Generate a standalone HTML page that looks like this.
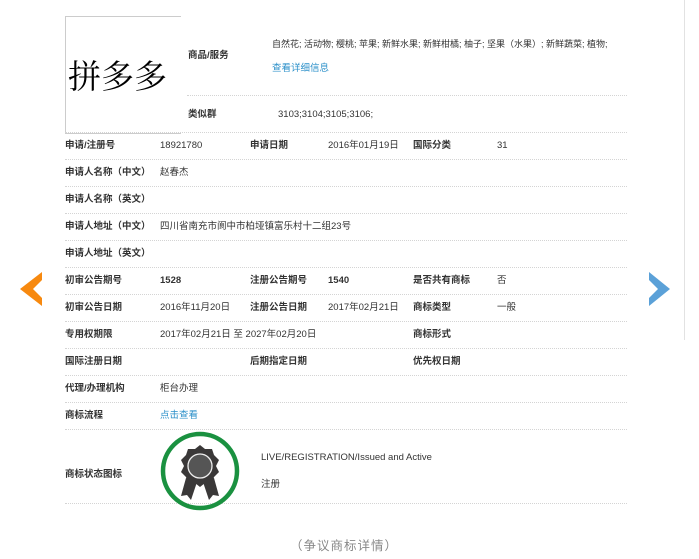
<!DOCTYPE html>
<html><head><meta charset="utf-8"><style>
body{margin:0;width:699px;height:559px;background:#fff;position:relative;overflow:hidden;font-family:"Liberation Sans","Noto Sans CJK SC",sans-serif;font-size:9.5px;color:#333}
.a{position:absolute;white-space:nowrap;line-height:12px}
.b{font-weight:bold;color:#333}
.l{position:absolute;left:65px;width:562px;height:0;border-top:1px dotted #d4d4d4}
.lk{color:#2a8fc9}
</style></head><body>
<div style="position:absolute;left:684px;top:0;width:1px;height:340px;background:#e2e2e2"></div>
<div style="position:absolute;left:65px;top:16px;width:115px;height:116px;border:1px solid #ccc;border-right:none"></div>
<div class="a" style="left:68px;top:55px;font-size:33px;line-height:40px;font-family:'Noto Serif CJK SC','Noto Sans CJK SC',serif;color:#000">拼多多</div>
<div class="a b" style="left:188px;top:50px">商品/服务</div>
<div class="a" style="left:272px;top:38px;font-size:9px">自然花; 活动物; 樱桃; 苹果; 新鲜水果; 新鲜柑橘; 柚子; 坚果（水果）; 新鲜蔬菜; 植物;</div>
<div class="a lk" style="left:272px;top:63px">查看详细信息</div>
<div class="l" style="left:187px;width:440px;top:95px"></div>
<div class="a b" style="left:188px;top:109px">类似群</div>
<div class="a" style="left:278px;top:109px">3103;3104;3105;3106;</div>
<div class="l" style="top:132px"></div>

<div class="a b" style="left:65px;top:140px">申请/注册号</div><div class="a" style="left:160px;top:140px">18921780</div>
<div class="a b" style="left:250px;top:140px">申请日期</div><div class="a" style="left:328px;top:140px">2016年01月19日</div>
<div class="a b" style="left:413px;top:140px">国际分类</div><div class="a" style="left:497px;top:140px">31</div>
<div class="l" style="top:159px"></div>
<div class="a b" style="left:65px;top:167px">申请人名称（中文）</div><div class="a" style="left:160px;top:167px">赵春杰</div>
<div class="l" style="top:186px"></div>
<div class="a b" style="left:65px;top:194px">申请人名称（英文）</div>
<div class="l" style="top:213px"></div>
<div class="a b" style="left:65px;top:221px">申请人地址（中文）</div><div class="a" style="left:160px;top:221px">四川省南充市阆中市柏垭镇富乐村十二组23号</div>
<div class="l" style="top:240px"></div>
<div class="a b" style="left:65px;top:248px">申请人地址（英文）</div>
<div class="l" style="top:267px"></div>
<div class="a b" style="left:65px;top:275px">初审公告期号</div><div class="a b" style="left:160px;top:275px">1528</div>
<div class="a b" style="left:250px;top:275px">注册公告期号</div><div class="a b" style="left:328px;top:275px">1540</div>
<div class="a b" style="left:413px;top:275px">是否共有商标</div><div class="a" style="left:497px;top:275px">否</div>
<div class="l" style="top:294px"></div>
<div class="a b" style="left:65px;top:302px">初审公告日期</div><div class="a" style="left:160px;top:302px">2016年11月20日</div>
<div class="a b" style="left:250px;top:302px">注册公告日期</div><div class="a" style="left:328px;top:302px">2017年02月21日</div>
<div class="a b" style="left:413px;top:302px">商标类型</div><div class="a" style="left:497px;top:302px">一般</div>
<div class="l" style="top:321px"></div>
<div class="a b" style="left:65px;top:329px">专用权期限</div><div class="a" style="left:160px;top:329px">2017年02月21日 至 2027年02月20日</div>
<div class="a b" style="left:413px;top:329px">商标形式</div>
<div class="l" style="top:348px"></div>
<div class="a b" style="left:65px;top:356px">国际注册日期</div>
<div class="a b" style="left:250px;top:356px">后期指定日期</div>
<div class="a b" style="left:413px;top:356px">优先权日期</div>
<div class="l" style="top:375px"></div>
<div class="a b" style="left:65px;top:383px">代理/办理机构</div><div class="a" style="left:160px;top:383px">柜台办理</div>
<div class="l" style="top:402px"></div>
<div class="a b" style="left:65px;top:410px">商标流程</div><div class="a lk" style="left:160px;top:410px">点击查看</div>
<div class="l" style="top:429px"></div>
<div class="a b" style="left:65px;top:469px">商标状态图标</div>
<div class="a" style="left:261px;top:452px">LIVE/REGISTRATION/Issued and Active</div>
<div class="a" style="left:261px;top:479px">注册</div>
<div class="l" style="top:503px"></div>
<svg style="position:absolute;left:0;top:0" width="699" height="559">
<circle cx="200" cy="471" r="37" fill="none" stroke="#1a9140" stroke-width="4.5"/>
<polygon points="186,478 181,496 187,495 191,500 197,482" fill="#3a3838"/>
<polygon points="214,478 219,496 213,495 209,500 203,482" fill="#3a3838"/>
<polygon points="200,445 205,449 212,449 214,455 219,460 216,466 219,472 214,477 212,483 205,483 200,487 195,483 188,483 186,477 181,472 184,466 181,460 186,455 188,449 195,449" fill="#3a3838"/>
<circle cx="200" cy="466" r="12" fill="#555" stroke="#eee" stroke-width="1.3"/>
<polygon points="42,272 20,289 42,306 42,298 33,289 42,280" fill="#f7890f"/>
<polygon points="649,272 670,289 649,306 649,298 658,289 649,280" fill="#5ba1d8"/>
</svg>
<div class="a" style="left:290px;top:538px;font-size:12.5px;line-height:16px;color:#888;letter-spacing:1px">（争议商标详情）</div>
</body></html>
